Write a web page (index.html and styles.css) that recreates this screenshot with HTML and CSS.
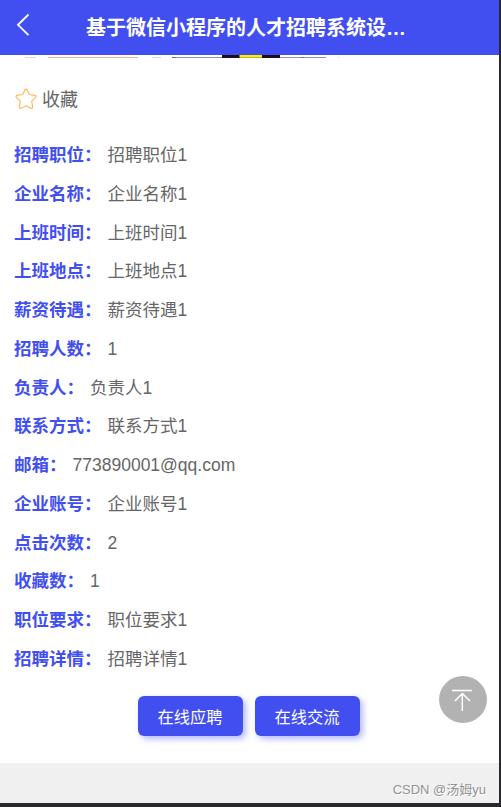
FILE: index.html
```html
<!DOCTYPE html>
<html lang="zh-CN">
<head>
    <meta charset="UTF-8">
    <meta name="viewport" content="width=device-width, initial-scale=1.0">
    <title>基于微信小程序的人才招聘系统设计</title>
    <link rel="stylesheet" href="styles.css">
</head>
<body>
    <div class="page">
        <header class="navbar">
            <svg class="back" width="14" height="24" viewBox="0 0 14 24">
                <path d="M12.5 1.5 L2 11.8 L12.5 22.2" fill="none" stroke="#fff" stroke-width="1.8"/>
            </svg>
            <h1>基于微信小程序的人才招聘系统设…</h1>
        </header>

        <main class="content">
            <!-- bottom edge of the cover picture -->
            <svg class="cover" width="498" height="3" viewBox="0 0 498 3">
                <path d="M25 2.5 H36" stroke="#f8d3bb"/>
                <path d="M48 2.5 H138" stroke="#efb58c"/>
                <path d="M152 2.5 H161" stroke="#dcdce0"/>
                <path d="M172 2.5 H222 M280 2.5 H326" stroke="#9590bb"/>
                <path d="M172 2.5 H176 M301 2.5 H304" stroke="#77736f"/>
                <path d="M337 2.5 H340" stroke="#eeeeee"/>
                <path d="M222 0 H280 V3 H222 Z" fill="#1c0f18"/>
                <path d="M239.5 0 H262 V2 H239.5 Z" fill="#ffee00"/>
                <path d="M239.5 2.5 H262" stroke="#c7b61a"/>
            </svg>

            <div class="favorite">
                <svg width="22" height="22" viewBox="0 0 22 22">
                    <path d="M9.9 1.9 Q11 0.2 12.1 1.9 L14.3 6.5 L19.8 7.3 Q21.8 7.8 20.5 9.4 L16.7 13.3 L17.6 18.7 Q17.7 20.9 15.7 20.2 L11 17.8 L6.3 20.2 Q4.3 20.9 4.4 18.7 L5.3 13.3 L1.5 9.4 Q0.2 7.8 2.2 7.3 L7.7 6.5 Z" fill="none" stroke="#ffb95c" stroke-width="1.2" stroke-linejoin="round"/>
                </svg>
                <span>收藏</span>
            </div>

            <div class="details">
                <div class="row"><b>招聘职位：</b><span>招聘职位1</span></div>
                <div class="row"><b>企业名称：</b><span>企业名称1</span></div>
                <div class="row"><b>上班时间：</b><span>上班时间1</span></div>
                <div class="row"><b>上班地点：</b><span>上班地点1</span></div>
                <div class="row"><b>薪资待遇：</b><span>薪资待遇1</span></div>
                <div class="row"><b>招聘人数：</b><span>1</span></div>
                <div class="row"><b>负责人：</b><span>负责人1</span></div>
                <div class="row"><b>联系方式：</b><span>联系方式1</span></div>
                <div class="row"><b>邮箱：</b><span>773890001@qq.com</span></div>
                <div class="row"><b>企业账号：</b><span>企业账号1</span></div>
                <div class="row"><b>点击次数：</b><span>2</span></div>
                <div class="row"><b>收藏数：</b><span>1</span></div>
                <div class="row"><b>职位要求：</b><span>职位要求1</span></div>
                <div class="row"><b>招聘详情：</b><span>招聘详情1</span></div>
            </div>

            <div class="actions">
                <button>在线应聘</button>
                <button>在线交流</button>
            </div>
        </main>

        <footer class="footer">CSDN @汤姆yu</footer>

        <div class="to-top">
            <svg width="48" height="48" viewBox="0 0 48 48">
                <path d="M13 14.5 H33 M23.3 35 V17.5 M16 25 L23.3 17.5 L31 25" fill="none" stroke="#fff" stroke-width="1.5"/>
            </svg>
        </div>
    </div>
</body>
</html>
```
FILE: styles.css
```css
* {
    box-sizing: border-box;
}

body {
    margin: 0;
    background-color: #29282d;
    font-family: "Liberation Sans", "Noto Sans CJK SC", sans-serif;
    color: #666;
}

.page {
    position: relative;
    width: 499px;
    height: 803px;
    display: flex;
    flex-direction: column;
    background-color: #fff;
}

.navbar {
    height: 55px;
    display: flex;
    align-items: center;
    padding-left: 16px;
    background-color: #424ff0;
    color: #fff;
}

.back {
    margin-top: -6px;
}

.navbar h1 {
    margin: 0 0 0 56px;
    font-size: 20px;
    line-height: 30px;
    font-weight: bold;
    white-space: nowrap;
}

.content {
    height: 708px;
}

.cover {
    display: block;
}

.favorite {
    height: 82px;
    display: flex;
    align-items: center;
    gap: 6px;
    padding-left: 15px;
    font-size: 18px;
}

.favorite span {
    margin: -3px 0 0 -1px;
}

.details {
    padding: 0 14px;
    margin-top: -4px;
    font-size: 17.5px;
}

.row {
    height: 38.77px;
    line-height: 38.77px;
    white-space: nowrap;
}

.row b {
    color: #424ff0;
}

.row span {
    margin-left: 6px;
}

.actions {
    display: flex;
    justify-content: center;
    gap: 12px;
    margin-top: 17px;
    padding-right: 2px;
}

.actions button {
    width: 105px;
    height: 40px;
    padding: 0;
    border: none;
    border-radius: 6px;
    background-color: #424ff0;
    box-shadow: 3px 3px 6px rgba(66, 79, 240, 0.4);
    color: #fff;
    font-family: inherit;
    font-size: 16.3px;
}

.footer {
    height: 40px;
    padding: 17px 13px 0 0;
    background-color: #f0f0f0;
    color: #929292;
    font-size: 13px;
    line-height: 20px;
    text-align: right;
    text-shadow: 1px 1px 0 #fff;
}

/* floats over the page content */
.to-top {
    position: absolute;
    right: 12px;
    bottom: 80px;
    width: 48px;
    height: 47px;
    border-radius: 50%;
    background-color: #b2b2b2;
}
```
